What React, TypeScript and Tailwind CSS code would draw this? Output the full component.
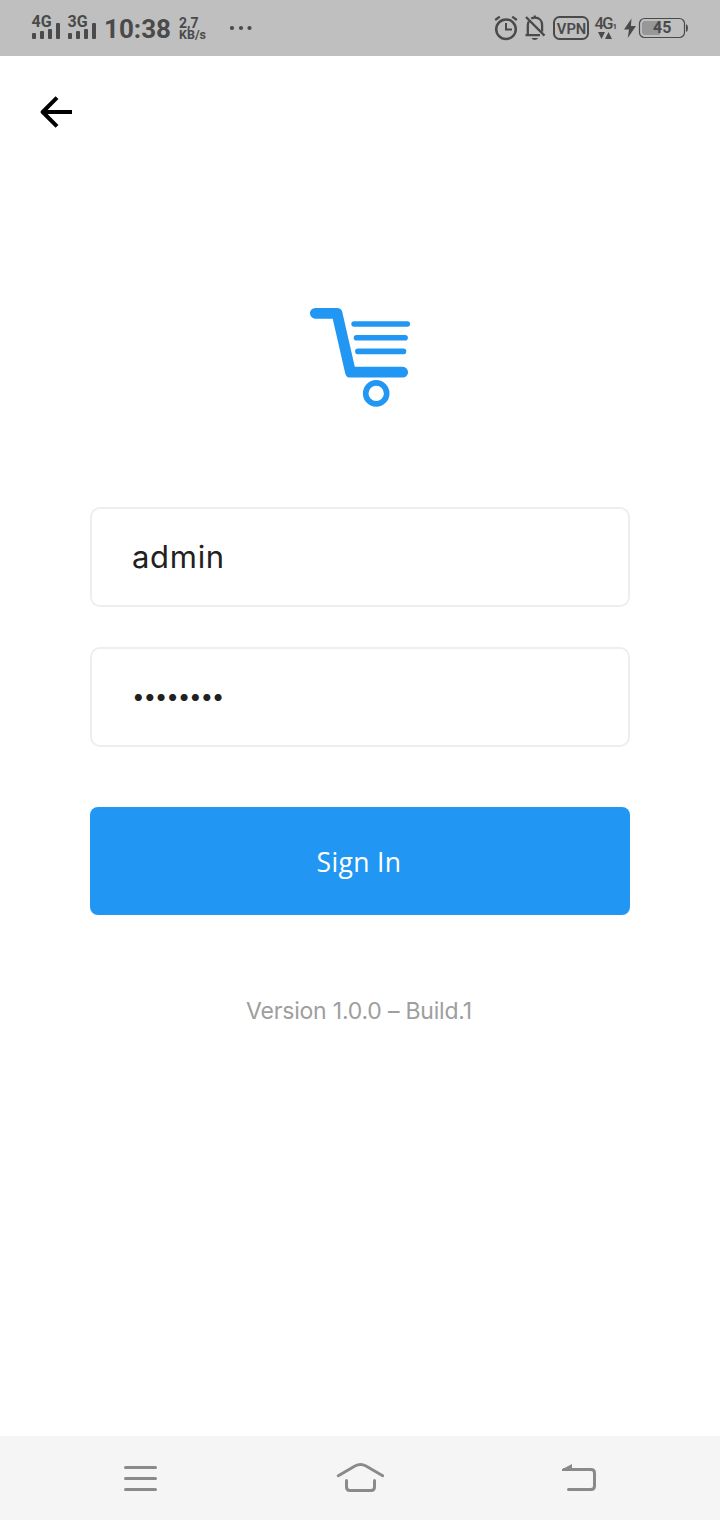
import React from "react";

function Signal({ label }: { label: string }) {
  return (
    <svg width="30" height="28" viewBox="0 0 30 28" fill="currentColor" className="shrink-0 overflow-visible">
      <text x="0.5" y="12.8" fontSize="16" fontWeight="700" fontFamily="Roboto, sans-serif">{label}</text>
      <rect x="1" y="19" width="4" height="6" rx="1" />
      <rect x="9" y="17" width="4" height="8" rx="1" />
      <rect x="17" y="15" width="4" height="10" rx="1" />
      <rect x="25" y="9" width="4" height="16" rx="1" />
    </svg>
  );
}

function StatusBar() {
  return (
    <header className="flex h-14 shrink-0 items-center bg-[#bfbfbf] pl-[31px] pr-8 font-['Roboto',sans-serif] font-bold text-[#4a4a4a]">
      <Signal label="4G" />
      <span className="w-1.5" />
      <Signal label="3G" />
      <span className="ml-[7px] w-[75px] whitespace-nowrap pt-0.5 text-[26px] leading-8">10:38</span>
      <div className="flex w-[53px] flex-col pt-0.5 leading-3">
        <span className="text-[14px]">2,7</span>
        <span className="text-[12.5px]">KB/s</span>
      </div>
      <svg width="22" height="6" viewBox="0 0 22 6" fill="currentColor" className="-ml-0.5">
        <circle cx="2" cy="3" r="2.1" />
        <circle cx="11" cy="3" r="2.1" />
        <circle cx="19.5" cy="3" r="2.1" />
      </svg>
      <div className="ml-auto flex h-14 items-center">
        <svg width="24" height="56" viewBox="494 0 24 56" fill="none" stroke="currentColor">
          <circle cx="506" cy="29.2" r="9.8" strokeWidth="2.5" />
          <path d="M506 23v6.5h6" strokeWidth="2" />
          <path d="M495.2 20l4.6-3.4M512.2 16.6l4.6 3.4" strokeWidth="2.2" />
        </svg>
        <svg width="22" height="56" viewBox="524 0 22 56" className="ml-1.5" fill="none" stroke="currentColor" strokeWidth="2.3">
          <path d="M527.8 35V25.5c0-1.5.3-2.8 1-4M531.2 18.6c1-.6 2.3-.9 3.8-.9 4.2 0 7.1 3 7.1 7.4v6.5M525.5 35.2H540M526 17l18.5 18.6M534.8 15.6v2" />
          <path d="M531.5 38h6.5c-.6 1.3-1.7 2-3.2 2s-2.7-.7-3.3-2z" fill="currentColor" stroke="none" />
        </svg>
        <svg width="37" height="56" viewBox="553 0 37 56" className="ml-[7px]">
          <rect x="554" y="17" width="34" height="22" rx="5.5" fill="none" stroke="currentColor" strokeWidth="2" />
          <text x="556.8" y="33.8" fontSize="15.5" fontWeight="600" fill="currentColor" textLength="29.5" lengthAdjust="spacingAndGlyphs">VPN</text>
        </svg>
        <svg width="24" height="56" viewBox="594 0 24 56" className="ml-1" fill="currentColor">
          <text x="594.5" y="28.8" fontSize="16.5" fontWeight="500" textLength="19">4G</text>
          <text x="612.5" y="29" fontSize="8" fontWeight="700">1</text>
          <path d="M598 32h7l-3.5 7zM605 39h7l-3.5-7z" />
        </svg>
        <svg width="70" height="56" viewBox="618 0 70 56">
          <path d="M631.5 18.5l-7.5 11h5l-1.2 8.5 8.2-12h-5.1z" fill="currentColor" />
          <rect x="639.5" y="18.5" width="45" height="19" rx="5" fill="none" stroke="currentColor" strokeWidth="1.2" />
          <path d="M645 21h15v14h-15a3 3 0 0 1-3-3v-8a3 3 0 0 1 3-3z" fill="#979797" />
          <path d="M686 24q2 1 2 4t-2 4z" fill="currentColor" />
          <text x="653" y="33.4" fontSize="16" fontWeight="700" fill="currentColor">45</text>
        </svg>
      </div>
    </header>
  );
}

function CartLogo() {
  return (
    <svg width="102" height="102" viewBox="309 307 102 102" fill="none" stroke="#2296f3" strokeLinecap="round" strokeLinejoin="round" className="mx-auto">
      <path d="M315.3 313.3H337L350.5 372.2H402.7" strokeWidth="10.8" />
      <path d="M354.1 324h53.2M356.5 337.8h48.6M357.9 351.4h45.6" strokeWidth="5.6" />
      <circle cx="376.2" cy="393.4" r="10.5" strokeWidth="5.6" />
    </svg>
  );
}

function NavBar() {
  return (
    <nav className="flex h-[84px] shrink-0 items-center bg-[#f5f5f5] pl-[123px] text-[#8a8a8a]">
      <svg width="35" height="84" viewBox="123 1436 35 84" fill="none" stroke="currentColor" strokeWidth="3" strokeLinecap="round">
        <path d="M125.5 1467.5h30M125.5 1478.5h30M125.5 1489.5h30" />
      </svg>
      <svg width="48" height="84" viewBox="336 1436 48 84" className="ml-[178px]" fill="none" stroke="currentColor" strokeWidth="3" strokeLinecap="round">
        <path d="M338.3 1475.7L355 1466q5.5-2.8 11 0l16.7 9.7M346.5 1480.5v6.5q0 3.5 3.5 3.5h21q3.5 0 3.5-3.5v-6.5" />
      </svg>
      <svg width="35" height="84" viewBox="562 1436 35 84" className="ml-[178px]" fill="none" stroke="currentColor" strokeWidth="3">
        <path d="M564 1469.5h27q3.5 0 3.5 3.5v13q0 3.5-3.5 3.5h-22.5" strokeLinecap="round" />
        <path d="M562 1470.9v-1.6l10-5.3v6.9z" fill="currentColor" stroke="none" />
      </svg>
    </nav>
  );
}

export default function App() {
  return (
    <div className="flex h-[1520px] w-[720px] flex-col overflow-hidden bg-white font-['Inter',sans-serif] text-[#212121]">
      <StatusBar />
      <main className="flex flex-1 flex-col">
        <button aria-label="Back" className="ml-10 mt-10 h-8 w-8">
          <svg width="32" height="32" viewBox="0 0 32 32" fill="none" stroke="#000" strokeWidth="4">
            <path d="M32 16H3.5M17 1.7L2.7 16 17 30.3" strokeLinejoin="round" />
          </svg>
        </button>
        <div className="mt-[179px]"><CartLogo /></div>
        <form className="mx-[90px] mt-[98px] flex flex-col" onSubmit={(e) => e.preventDefault()}>
          <input aria-label="Username" defaultValue="admin" className="h-[100px] rounded-[10px] border-2 border-[#eeeeee] bg-white px-10 pb-0.5 text-[31px] font-[370] tracking-[0.7px] outline-none" />
          <input aria-label="Password" type="password" defaultValue="password" className="mt-10 h-[100px] rounded-[10px] border-2 border-[#eeeeee] bg-white px-10 pb-1 text-[22.5px] tracking-[-1.25px] outline-none" />
          <button className="mt-[60px] h-[108px] rounded-lg bg-[#2296f3] pr-0.5 pt-[3px] font-['Open_Sans',sans-serif] text-[26.5px] tracking-[0.35px] text-white">Sign In</button>
        </form>
        <p className="mt-[78px] pr-0.5 text-center text-[23px] leading-9 tracking-[-0.2px] text-[#9e9e9e]">Version 1.0.0 – Build.1</p>
      </main>
      <NavBar />
    </div>
  );
}
